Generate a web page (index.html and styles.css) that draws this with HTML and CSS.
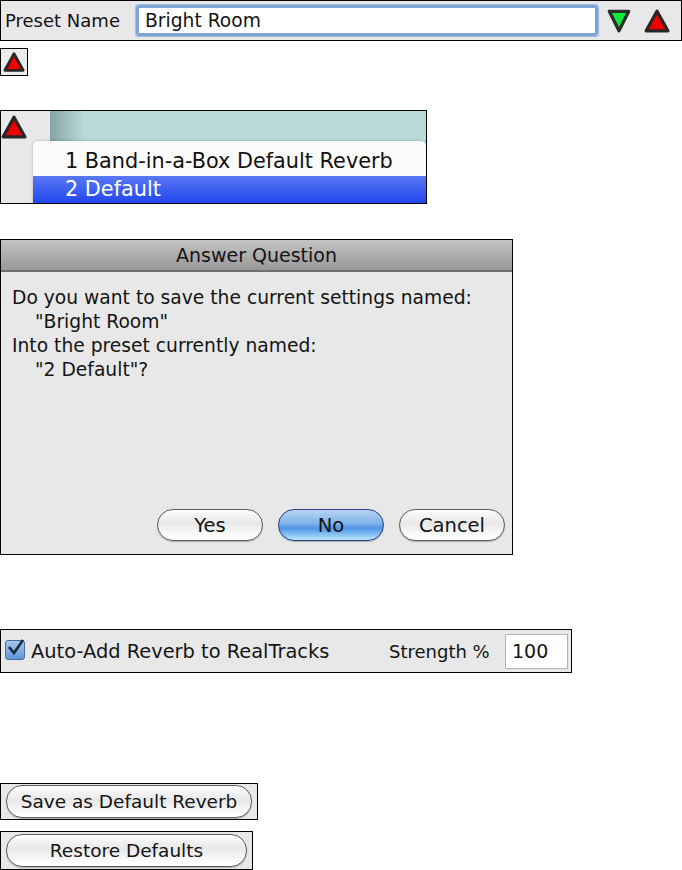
FILE: index.html
```html
<!DOCTYPE html>
<html lang="en">
<head>
<meta charset="utf-8">
<title>Reverb presets</title>
<link rel="stylesheet" href="styles.css">
</head>
<body>
<svg class="defs" width="0" height="0" aria-hidden="true">
  <symbol id="up" viewBox="0 0 24 24">
    <path d="M12 3 L22 21 H2 Z" fill="#f00000" stroke="#2a2424" stroke-width="3" stroke-linejoin="round"/>
  </symbol>
  <symbol id="down" viewBox="0 0 24 24">
    <path d="M3 3 H21 L12 21 Z" fill="#0fe83c" stroke="#2a2e2a" stroke-width="3" stroke-linejoin="round"/>
  </symbol>
</svg>

<section class="panel preset-bar">
  <span class="label">Preset Name</span>
  <div class="name-field">Bright Room</div>
  <svg class="arrow arrow-down"><use href="#down"/></svg>
  <svg class="arrow arrow-up"><use href="#up"/></svg>
</section>

<div class="panel tiny-box"><svg class="tiny-arrow"><use href="#up"/></svg></div>

<section class="panel menu-shot">
  <div class="menu-side"><svg class="menu-arrow"><use href="#up"/></svg></div>
  <div class="teal"></div>
  <div class="menu">
    <div class="menu-item">1 Band-in-a-Box Default Reverb</div>
    <div class="menu-item selected">2 Default</div>
  </div>
</section>

<section class="panel dialog">
  <header class="dialog-title">Answer Question</header>
  <div class="dialog-body">
    <p>Do you want to save the current settings named:</p>
    <p class="indent">"Bright Room"</p>
    <p>Into the preset currently named:</p>
    <p class="indent">"2 Default"?</p>
  </div>
  <div class="dialog-actions">
    <button class="pill btn-yes">Yes</button>
    <button class="pill pill-default btn-no">No</button>
    <button class="pill btn-cancel">Cancel</button>
  </div>
</section>

<section class="panel reverb-row">
  <span class="check">
    <svg viewBox="0 0 20 20" width="20" height="20"><path d="M4 8 L9 14 L18 1" fill="none" stroke="#1c2a44" stroke-width="2.6"/></svg>
  </span>
  <span class="check-label">Auto-Add Reverb to RealTracks</span>
  <span class="strength">Strength %</span>
  <div class="num-field">100</div>
</section>

<div class="panel btn-shot save-shot"><button class="pill wide">Save as Default Reverb</button></div>
<div class="panel btn-shot restore-shot"><button class="pill wide">Restore Defaults</button></div>
</body>
</html>
```

FILE: styles.css
```css
* { box-sizing: border-box; }
html, body { margin: 0; padding: 0; background: #fff; }
body {
  font-family: "DejaVu Sans", sans-serif;
  font-size: 18.7px;
  color: #141414;
  height: 870px;
  overflow: hidden;
}
.defs { position: absolute; }
.panel { border: 1px solid #000; background: #e8e8e8; }

.preset-bar {
  width: 682px;
  height: 41px;
  display: flex;
  align-items: center;
  padding-left: 4px;
}
.label { width: 131px; font-size: 18px; white-space: nowrap; }
.name-field {
  width: 462px;
  height: 31px;
  line-height: 26px;
  background: #fff;
  border: 1px solid #7f9fcc;
  border-radius: 3px;
  box-shadow: 0 0 0 2px #7ea6d8 inset, 0 0 1px 1px #9dbce0;
  padding: 2px 0 0 8px;
}
.arrow { width: 26px; height: 26px; flex: none; }
.arrow-down { margin-left: 8px; }
.arrow-up { margin-left: 12px; }

.tiny-box {
  width: 28px;
  height: 28px;
  margin-top: 7px;
  display: flex;
  align-items: center;
  justify-content: center;
  background: #ececec;
}
.tiny-arrow { width: 22px; height: 22px; }

.menu-shot {
  position: relative;
  width: 427px;
  height: 94px;
  margin-top: 34px;
  overflow: hidden;
  display: flex;
  background: #e8e8e8;
}
.menu-side { width: 49px; padding: 3px 0 0 0; }
.menu-arrow { width: 26px; height: 26px; }
.teal {
  flex: 1;
  background: linear-gradient(90deg, #83a4a3 0, #b7dad9 34px);
}
.menu {
  position: absolute;
  left: 32px;
  right: 0;
  top: 30px;
  bottom: 0;
  background: #fbfbfb;
  border-radius: 5px 5px 0 0;
  box-shadow: 0 0 3px rgba(0,0,0,.25);
  font-size: 20.8px;
}
.menu-item { height: 35px; padding: 5px 0 0 32px; line-height: 30px; color: #111; white-space: nowrap; }
.menu-item.selected {
  height: 27px;
  padding-top: 0;
  line-height: 26px;
  color: #fff;
  background: linear-gradient(#5a78f2, #2147ef);
}

.dialog {
  width: 513px;
  height: 316px;
  margin-top: 35px;
  display: flex;
  flex-direction: column;
}
.dialog-title {
  height: 32px;
  text-align: center;
  line-height: 31px;
  background: linear-gradient(#c4c4c4, #989898);
  border-bottom: 2px solid #6f6f6f;
  font-size: 19px;
}
.dialog-body { flex: 1; padding: 14px 0 0 11px; line-height: 24px; white-space: nowrap; }
.dialog-body p { margin: 0; }
.dialog-body .indent { padding-left: 23px; }
.dialog-actions { display: flex; gap: 15px; padding: 0 7px 13px 156px; }

.pill {
  font: inherit;
  font-size: 19.5px;
  color: #141414;
  height: 32px;
  padding: 0;
  border: 1px solid #5e5e5e;
  border-radius: 16px;
  background: linear-gradient(#fdfdfd 0, #e8e8e8 45%, #ffffff 90%);
  box-shadow: 0 1px 1px rgba(0,0,0,.25);
  white-space: nowrap;
}
.btn-yes, .btn-no, .btn-cancel { width: 106px; }
.pill-default {
  border-color: #2c3f88;
  background: linear-gradient(#b9d5f2 0, #7fb2ea 45%, #4f94e6 60%, #b9e6fb 100%);
}

.reverb-row {
  width: 572px;
  height: 44px;
  margin-top: 74px;
  display: flex;
  align-items: center;
  padding-left: 4px;
}
.check {
  width: 20px;
  height: 20px;
  flex: none;
  border: 1px solid #4a6a9c;
  border-radius: 3px;
  background: linear-gradient(#a6c6ea, #5f97d8);
  display: flex;
  margin-top: -2px;
}
.check svg { margin: -2px 0 0 -1px; flex: none; }
.check-label { width: 364px; padding-left: 6px; font-size: 19.4px; white-space: nowrap; }
.strength { width: 116px; font-size: 18px; white-space: nowrap; }
.num-field {
  width: 63px;
  height: 35px;
  background: #fff;
  border: 1px solid #b4b4b4;
  line-height: 33px;
  padding-left: 6px;
  font-size: 19px;
}

.btn-shot { display: flex; align-items: center; padding: 0 5px; }
.save-shot { width: 258px; height: 37px; margin-top: 110px; }
.restore-shot { width: 253px; height: 39px; margin-top: 11px; }
.pill.wide { width: 100%; height: 33px; border-radius: 16px; font-size: 18.5px; }
```
